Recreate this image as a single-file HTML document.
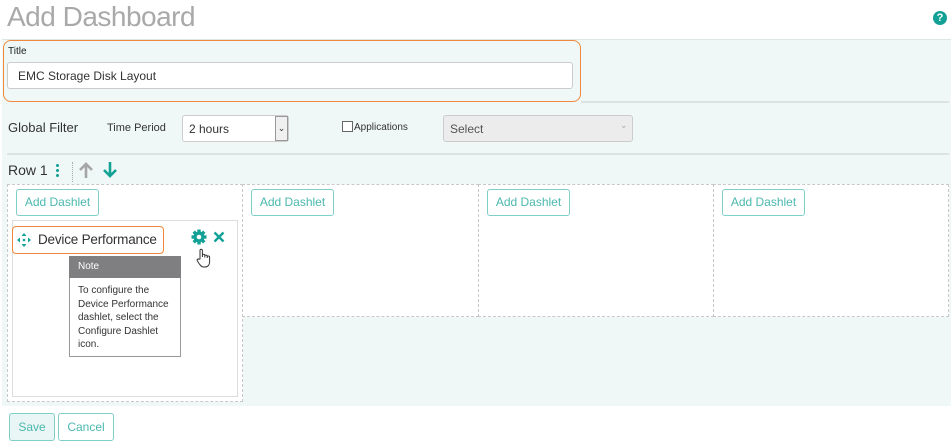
<!DOCTYPE html>
<html><head><style>
*{box-sizing:border-box;margin:0;padding:0}
body{width:951px;height:443px;background:#fff;font-family:"Liberation Sans",sans-serif;position:relative;overflow:hidden;color:#333}
.a{position:absolute}
.btn{position:absolute;border:1px solid #7fcfc8;border-radius:3px;color:#4bb8ae;font-size:12px;text-align:center;background:#fff}
.col{position:absolute;border:1px dashed #c8c8c8;background:#fff}
</style></head><body>
<div class="a" style="left:7px;top:1px;font-size:28px;color:#a9a9a9;letter-spacing:-0.5px">Add Dashboard</div>
<div class="a" style="left:933px;top:11px;width:14px;height:14px;border-radius:50%;background:#13a196;color:#fff;font-size:11px;font-weight:bold;text-align:center;line-height:14px">?</div>
<div class="a" style="left:2px;top:39px;width:949px;height:367px;background:#eff8f7;border-top:1px solid #dde8e6"></div>
<div class="a" style="left:3px;top:40px;width:578px;height:62px;border:1.5px solid #f0893b;border-radius:8px"></div>
<div class="a" style="left:8px;top:46px;font-size:10px;color:#222">Title</div>
<div class="a" style="left:7px;top:62px;width:566px;height:27px;background:#fff;border:1px solid #ccc;border-radius:3px;font-size:12px;padding:6px 10px;color:#333">EMC Storage Disk Layout</div>
<div class="a" style="left:581px;top:101px;width:368px;height:2px;background:#dde3e2"></div>
<div class="a" style="left:8px;top:120px;font-size:13px;color:#333">Global Filter</div>
<div class="a" style="left:107px;top:122px;font-size:11px;color:#333">Time Period</div>
<div class="a" style="left:182px;top:115px;width:107px;height:27px;background:#fff;border:1px solid #ccc;border-radius:3px;font-size:12px;padding:6px 6px">2 hours</div>
<div class="a" style="left:275px;top:116px;width:13px;height:25px;border:1px solid #999;background:#f0f0f0;font-size:9px;text-align:center;line-height:23px">&#8964;</div>
<div class="a" style="left:342px;top:121px;width:11px;height:11px;border:1px solid #666;background:#fff"></div>
<div class="a" style="left:354px;top:122px;font-size:10px;color:#333">Applications</div>
<div class="a" style="left:443px;top:115px;width:190px;height:27px;background:#ececec;border:1px solid #ccc;border-radius:3px;font-size:12px;padding:6px 6px;color:#555">Select</div>
<div class="a" style="left:620px;top:120px;font-size:9px;color:#aaa">&#8964;</div>
<div class="a" style="left:7px;top:153px;width:942px;height:2px;background:#dde3e2"></div>
<div class="a" style="left:8px;top:162px;font-size:14px;color:#333">Row 1</div>
<div class="a" style="left:56px;top:163px;width:3px;height:14px;background:radial-gradient(circle,#13a196 1.4px,transparent 1.6px) 0 0/3px 5px"></div>
<div class="a" style="left:72px;top:162px;height:20px;border-left:1px dotted #aaa"></div>
<svg class="a" style="left:78px;top:161px" width="16" height="18" viewBox="0 0 16 18"><path d="M8 17V3M2 9L8 3L14 9" stroke="#a6a6a6" stroke-width="2.6" fill="none"/></svg>
<svg class="a" style="left:102px;top:161px" width="16" height="18" viewBox="0 0 16 18"><path d="M8 1V15M2 9L8 15L14 9" stroke="#13a196" stroke-width="2.6" fill="none"/></svg>
<div class="col" style="left:7px;top:184px;width:236px;height:218px"></div>
<div class="col" style="left:242px;top:184px;width:237px;height:133px"></div>
<div class="col" style="left:478px;top:184px;width:236px;height:133px"></div>
<div class="col" style="left:713px;top:184px;width:236px;height:133px"></div>
<div class="btn" style="left:16px;top:189px;width:83px;height:27px;line-height:25px">Add Dashlet</div>
<div class="btn" style="left:251px;top:189px;width:83px;height:27px;line-height:25px">Add Dashlet</div>
<div class="btn" style="left:487px;top:189px;width:83px;height:27px;line-height:25px">Add Dashlet</div>
<div class="btn" style="left:722px;top:189px;width:83px;height:27px;line-height:25px">Add Dashlet</div>
<div class="a" style="left:12px;top:220px;width:226px;height:177px;border:1px solid #ddd;background:#fff"></div>
<div class="a" style="left:12px;top:226px;width:152px;height:28px;border:1.5px solid #f0893b;border-radius:4px;background:#fff"></div>
<svg class="a" style="left:17px;top:233px" width="14" height="14" viewBox="0 0 14 14" fill="#13a196"><path d="M7 0L9.5 3H4.5ZM7 14L4.5 11H9.5ZM0 7L3 4.5V9.5ZM14 7L11 9.5V4.5Z"/><circle cx="7" cy="7" r="1.3"/></svg>
<div class="a" style="left:38px;top:232px;font-size:13.5px;letter-spacing:-0.2px;color:#333">Device Performance</div>
<svg class="a" style="left:191px;top:229px" width="16" height="16" viewBox="0 0 16 16"><g fill="#13a196"><circle cx="8" cy="8" r="5.5"/><rect x="6.3" y="0.5" width="3.4" height="15"/><rect x="6.3" y="0.5" width="3.4" height="15" transform="rotate(45 8 8)"/><rect x="6.3" y="0.5" width="3.4" height="15" transform="rotate(90 8 8)"/><rect x="6.3" y="0.5" width="3.4" height="15" transform="rotate(135 8 8)"/></g><circle cx="8" cy="8" r="2.3" fill="#fff"/></svg>
<svg class="a" style="left:213px;top:231px" width="12" height="12" viewBox="0 0 12 12"><path d="M1.5 1.5L10.5 10.5M10.5 1.5L1.5 10.5" stroke="#13a196" stroke-width="2.4"/></svg>
<svg class="a" style="left:196px;top:248px" width="16" height="20" viewBox="0 0 16 20"><path d="M4 11V2.5a1.2 1.2 0 0 1 2.4 0V9V7.5a1.2 1.2 0 0 1 2.4 0V9.5V8.3a1.2 1.2 0 0 1 2.4 0V10V9.2a1.2 1.2 0 0 1 2.4 0V14c0 3-2 5-4.5 5H7.5C5.5 19 4.5 17.5 3 15.5L1.2 12.5a1.1 1.1 0 0 1 1.8-1.2Z" fill="#fff" stroke="#333" stroke-width="1"/></svg>
<div class="a" style="left:69px;top:256px;width:112px;height:101px;border:1px solid #999;background:#fff"></div>
<div class="a" style="left:69px;top:256px;width:112px;height:22px;background:#7f7f81;color:#fff;font-size:10px;padding:5px 9px">Note</div>
<div class="a" style="left:78px;top:284px;width:100px;font-size:10px;line-height:13.6px;color:#333">To configure the Device Performance dashlet, select the Configure Dashlet icon.</div>
<div class="btn" style="left:9px;top:413px;width:46px;height:28px;line-height:26px;background:#eaf6f5">Save</div>
<div class="btn" style="left:58px;top:413px;width:56px;height:28px;line-height:26px">Cancel</div>
</body></html>
